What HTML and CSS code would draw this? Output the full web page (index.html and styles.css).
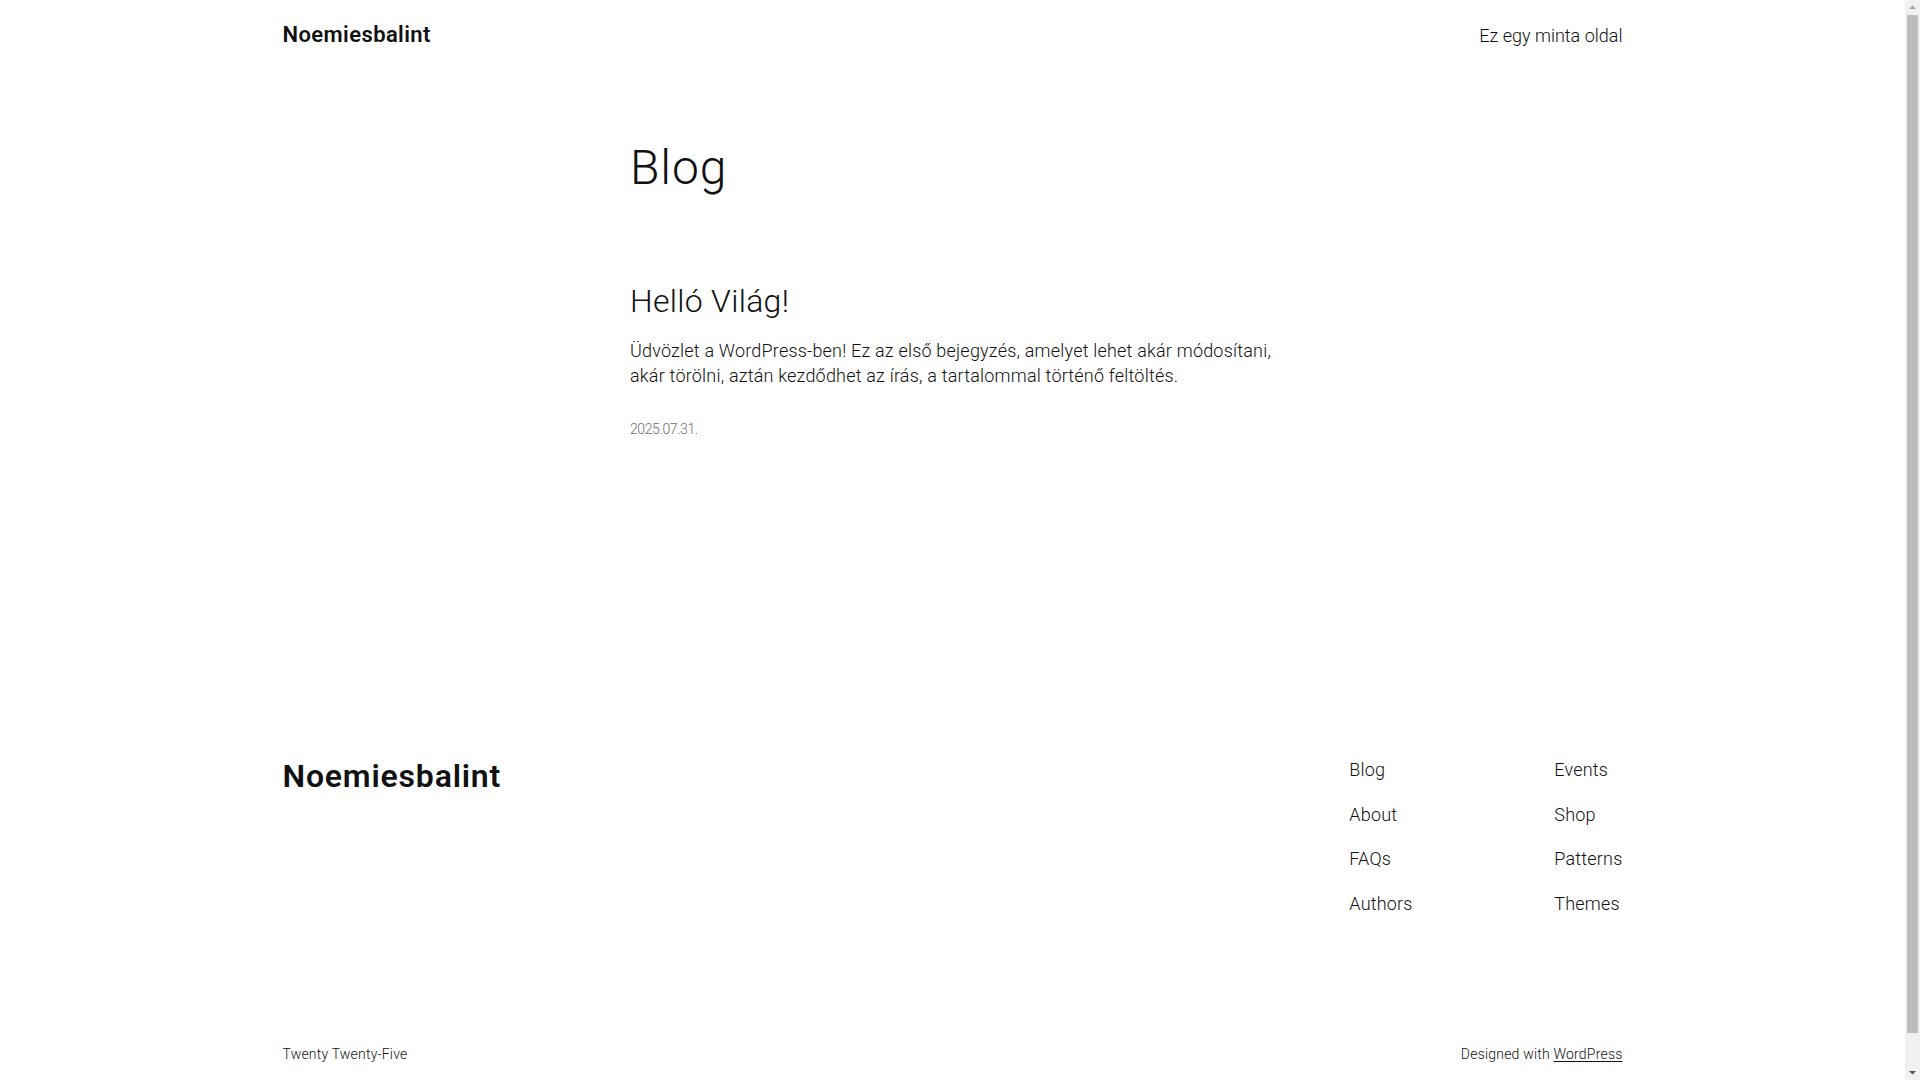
FILE: index.html
```html
<!DOCTYPE html>
<html lang="hu">
<head>
<meta charset="utf-8">
<title>Blog – Noemiesbalint</title>
<link rel="stylesheet" href="styles.css">
</head>
<body>
<div class="page">
<header class="site-header">
  <a class="site-title" href="#">Noemiesbalint</a>
  <nav class="header-nav"><a href="#">Ez egy minta oldal</a></nav>
</header>

<main class="site-main">
  <h1 class="page-title">Blog</h1>
  <article class="post">
    <h2 class="post-title"><a href="#">Helló Világ!</a></h2>
    <p class="post-excerpt">Üdvözlet a WordPress-ben! Ez az első bejegyzés, amelyet lehet akár módosítani, akár törölni, aztán kezdődhet az írás, a tartalommal történő feltöltés.</p>
    <time class="post-date">2025.07.31.</time>
  </article>
</main>

<footer class="site-footer">
  <div class="footer-top">
    <h2 class="footer-title"><a href="#">Noemiesbalint</a></h2>
    <nav class="footer-nav">
      <ul class="footer-col">
        <li><a href="#">Blog</a></li>
        <li><a href="#">About</a></li>
        <li><a href="#">FAQs</a></li>
        <li><a href="#">Authors</a></li>
      </ul>
      <ul class="footer-col">
        <li><a href="#">Events</a></li>
        <li><a href="#">Shop</a></li>
        <li><a href="#">Patterns</a></li>
        <li><a href="#">Themes</a></li>
      </ul>
    </nav>
  </div>
  <div class="footer-bottom">
    <p class="footer-small">Twenty Twenty-Five</p>
    <p class="footer-small">Designed with <a class="wp-link" href="#">WordPress</a></p>
  </div>
</footer>
</div>

<div class="scrollbar" aria-hidden="true">
  <svg class="sb-arrow sb-up" width="15" height="15" viewBox="0 0 15 15"><path d="M4 9 L7.5 5.5 L11 9 Z" fill="#a3a3a3"/></svg>
  <div class="sb-thumb"></div>
  <svg class="sb-arrow sb-down" width="15" height="15" viewBox="0 0 15 15"><path d="M4 6 L7.5 9.5 L11 6 Z" fill="#505050"/></svg>
</div>
</body>
</html>
```

FILE: styles.css
```css
html, body {
  margin: 0;
  padding: 0;
  background: #ffffff;
}

body {
  font-family: Roboto, "Liberation Sans", sans-serif;
  font-weight: 300;
  font-size: 18px;
  line-height: 1.4;
  color: #111111;
}

.page {
  width: calc(100% - 15px);
}

a {
  color: inherit;
  text-decoration: none;
}

h1, h2, p, ul {
  margin: 0;
  padding: 0;
}

ul {
  list-style: none;
}

/* Header */
.site-header {
  max-width: 1340px;
  margin: 0 auto;
  padding: 20px 0;
  display: flex;
  justify-content: space-between;
  align-items: center;
}

.site-title {
  font-size: 22px;
  font-weight: 600;
  letter-spacing: 0.4px;
  line-height: 1.4;
}

.header-nav {
  font-size: 18px;
  font-weight: 300;
  letter-spacing: 0px;
}

/* Main */
.site-main {
  max-width: 645px;
  margin: 68px auto 0;
}

.page-title {
  font-size: 48px;
  font-weight: 300;
  line-height: 1.2;
  letter-spacing: 0.9px;
}

.post {
  margin-top: 86px;
}

.post-title {
  font-size: 32px;
  font-weight: 300;
  line-height: 1.2;
  letter-spacing: 0.3px;
}

.post-excerpt {
  margin-top: 17px;
  font-size: 18px;
  line-height: 1.4;
  letter-spacing: 0.2px;
}

.post-date {
  display: block;
  margin-top: 32px;
  font-size: 14px;
  color: #6e6e6e;
  letter-spacing: -0.4px;
}

/* Footer */
.site-footer {
  max-width: 1340px;
  margin: 317.5px auto 0;
  padding-bottom: 40px;
}

.footer-top {
  display: flex;
  justify-content: space-between;
  align-items: flex-start;
}

.footer-title {
  font-size: 32px;
  font-weight: 600;
  line-height: 1.2;
  letter-spacing: 0.8px;
}

.footer-nav {
  display: grid;
  grid-template-columns: 205px auto;
}

.footer-col {
  display: flex;
  flex-direction: column;
  gap: 19.4px;
  font-size: 18px;
  font-weight: 300;
  line-height: 1.4;
  letter-spacing: 0.2px;
}

.footer-bottom {
  margin-top: 129px;
  display: flex;
  justify-content: space-between;
  align-items: center;
}

.footer-small {
  font-size: 14px;
  line-height: 1.4;
  font-weight: 300;
  letter-spacing: 0.2px;
}

.wp-link {
  text-decoration: underline;
  text-underline-offset: 2px;
}

/* Simulated browser scrollbar */
.scrollbar {
  position: fixed;
  top: 0;
  right: 0;
  width: 15px;
  height: 100vh;
  background: #f1f1f1;
  display: flex;
  flex-direction: column;
  align-items: center;
}

.sb-arrow {
  flex: none;
  display: block;
}

.sb-thumb {
  width: 11px;
  height: 1018px;
  background: #bdbdbd;
  flex: none;
}

.sb-down {
  margin-top: auto;
}
```
